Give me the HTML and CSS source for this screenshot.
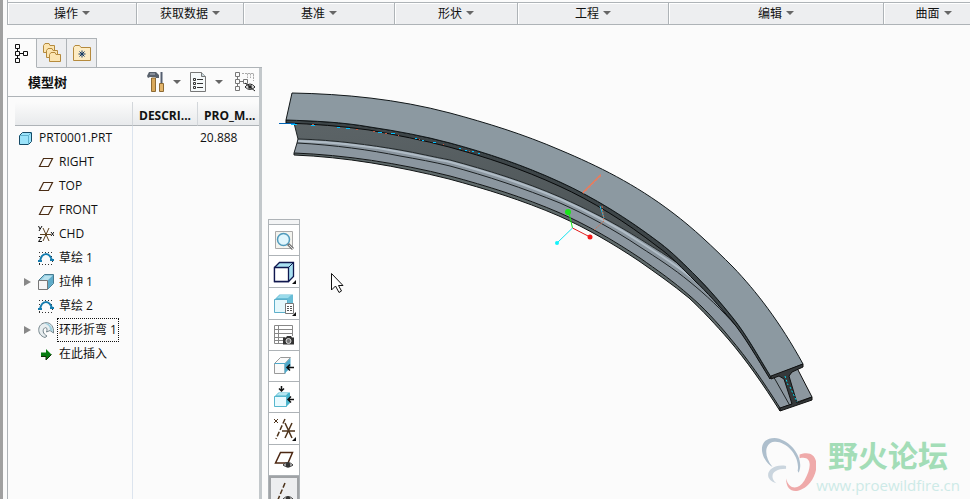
FILE: index.html
```
<!DOCTYPE html>
<html lang="zh-CN">
  <head>
    <meta charset="UTF-8">
    <title>PRT0001</title>
    <link rel="stylesheet" href="styles.css">
  </head>
  <body>
    <svg class="defs" width="0" height="0">
      <symbol id="plane" viewBox="0 0 16 16"><path d="M5.500 4.500H14.500L10.500 12.500H1.500Z" fill="none" stroke="#4a2c14" stroke-width="1.200"/></symbol>
      <symbol id="sketch" viewBox="0 0 16 16">
        <path d="M1 2.500H15M1 6.500H3M13 6.500H15M1 14.500H15M1.500 10V14M14.500 11V14" stroke="#333" stroke-dasharray="1 2" fill="none"/>
        <path d="M2 11C4 2 11 2 14 10" stroke="#157cae" stroke-width="2" fill="none"/>
        <path d="M0 10h4v2H0zM12 9h4v2h-4z" fill="#157cae"/>
      </symbol>
    </svg>
    <nav id="ribbon">
      <button class="group operate">操作<i></i></button>
      <button class="group data">获取数据<i></i></button>
      <button class="group datum">基准<i></i></button>
      <button class="group shape">形状<i></i></button>
      <button class="group engineering">工程<i></i></button>
      <button class="group edit">编辑<i></i></button>
      <button class="group surface">曲面<i></i></button>
    </nav>
    <div id="workspace">
      <div id="navigator">
        <div class="tabs">
          <button class="active" aria-label="模型树">
            <svg width="14" height="20" viewBox="0 0 14 20" fill="none" stroke="#111"><path d="M2.500 5V8M2.500 12V15M5 10.500H9"/><path d="M.5 1.500H4.500V5.500H.5ZM.5 8.500H4.500V12.500H.5ZM.5 15.500H4.500V19.500H.5ZM8.500 8.500H12.500V12.500H8.500Z"/></svg>
          </button>
          <button aria-label="文件夹浏览器">
            <svg width="20" height="20" viewBox="0 0 20 20" fill="#fce5b1" stroke="#b58a3d"><path d="M1.500 2.500L3 .5H7L8 2.500H12.500V9.500H1.500Z"/><path d="M4.500 7.500L6 5.500H10L11 7.500H15.500V14.500H4.500Z"/><path d="M7.500 11.500L9 9.500H13L14 11.500H18.500V18.500H7.500Z"/></svg>
          </button>
          <button aria-label="收藏夹">
            <svg width="18" height="16" viewBox="0 0 18 16"><path d="M.5 15.500V2.500L2 .5H6.500L8 2.500H17.500V15.500Z" fill="#fdecc4" stroke="#b58a3d"/><path d="M9 5.500V12.500M5.500 9H12.500M6.500 6.500L11.500 11.500M11.500 6.500L6.500 11.500" stroke="#143a66"/></svg>
          </button>
        </div>
        <div class="panel">
          <div class="titlebar">
            <h1>模型树</h1>
            <button class="tool" aria-label="设置">
              <svg width="18" height="20" viewBox="0 0 18 20"><path d="M4.500 6H8.500V19.500H4.500Z" fill="#d9a85a" stroke="#8d6a34"/><path d="M0 4L2 0H9L12 3V6H9L8 5H3L1 6Z" fill="#59616c"/><path d="M3 2H8" stroke="#b6bdc8"/><path d="M14.500 0V11" stroke="#555f70" stroke-width="2"/><path d="M12.500 11.500H16.500V19.500H12.500Z" fill="#e3b56b" stroke="#8d6a34"/></svg>
              <i></i>
            </button>
            <button class="tool" aria-label="显示">
              <svg width="17" height="20" viewBox="0 0 17 20"><path d="M.5 .5H11.500L15.500 4.500V19.500H.5Z" fill="#f5f9fa" stroke="#777"/><path d="M11.500 .5V4.500H15.500" fill="#c8d8dd" stroke="#777"/><path d="M7 7.500H13M7 11.500H13M7 15.500H13" stroke="#333"/><path d="M3.500 6.500h2v2h-2zM3.500 10.500h2v2h-2zM3.500 14.500h2v2h-2z" fill="none" stroke="#333"/></svg>
              <i></i>
            </button>
            <button class="tool" aria-label="隐藏">
              <svg width="21" height="20" viewBox="0 0 21 20" fill="none" stroke="#777"><path d="M.5 .5H4.500V4.500H.5ZM.5 7.500H4.500V11.500H.5ZM.5 14.500H4.500V18.500H.5ZM8.500 7.500H12.500V11.500H8.500ZM2.500 4.500V7.500M2.500 11.500V14.500M4.500 9.500H8.500"/><path d="M7 1.500H18.500V9M12.500 1.500V6M15.500 1.500V6M18.500 1.500V6" stroke="#aaa" stroke-dasharray="2 1"/><path d="M10 15Q15 9 20 15Q15 20 10 15Z" stroke="#222"/><circle cx="15" cy="15" r="2" fill="#222"/><path d="M10 11L20 19" stroke="#222"/></svg>
            </button>
          </div>
          <div class="tree">
            <table>
              <colgroup><col class="name"><col class="description"><col></colgroup>
              <thead>
                <tr><th></th><th>DESCRI...</th><th>PRO_M...</th></tr>
              </thead>
              <tbody>
                <tr>
                  <td class="root"><svg class="icon" viewBox="0 0 16 16"><path d="M1.500 5.500L4.500 2.500H13.500V11.500L10.500 14.500H1.500Z" fill="#9be3fa" stroke="#164a66"/><path d="M1.500 5.500H10.500V14.500M10.500 5.500L13.500 2.500" fill="none" stroke="#5fb0cc"/></svg><span>PRT0001.PRT</span></td><td></td><td>20.888</td>
                </tr>
                <tr><td><svg class="icon"><use href="#plane"/></svg><span>RIGHT</span></td><td></td><td></td></tr>
                <tr><td><svg class="icon"><use href="#plane"/></svg><span>TOP</span></td><td></td><td></td></tr>
                <tr><td><svg class="icon"><use href="#plane"/></svg><span>FRONT</span></td><td></td><td></td></tr>
                <tr>
                  <td><svg class="icon" viewBox="0 0 16 16" fill="none"><path d="M5 2L11 15M11 2L5 15M2 8.500H13" stroke="#5b3f1b"/><path d="M.5 0L2 3M4 0L1 5M0 11.500H3.500L.5 15.500H4M13 6L16 10M16 6L13 10" stroke="#111"/></svg><span>CHD</span></td><td></td><td></td>
                </tr>
                <tr><td><svg class="icon"><use href="#sketch"/></svg><span>草绘 1</span></td><td></td><td></td></tr>
                <tr class="closed">
                  <td><svg class="icon" viewBox="0 0 16 16"><path d="M.5 6.500L6.500 .5H15.500V9.500L9.500 15.500" fill="#91cbe0" stroke="#477b90"/><path d="M10 6L15 1V9L10 15Z" fill="#5eabc9"/><path d="M3 6.500L7 2H14L10 6Z" fill="#b9e2ee"/><path d="M.5 6.500H9.500V15.500H.5Z" fill="#f5f5f5" stroke="#777"/></svg><span>拉伸 1</span></td><td></td><td></td>
                </tr>
                <tr><td><svg class="icon"><use href="#sketch"/></svg><span>草绘 2</span></td><td></td><td></td></tr>
                <tr class="closed selected">
                  <td><svg class="icon" viewBox="0 0 16 16"><path d="M7 15.500C-2 13 -1 1 8 .7C13 .5 16 5 15.500 11L12 8.500L8.500 10C10 6 8 5 6.500 6C4 8 5 12 9 14Z" fill="#e8eef0" stroke="#75858c"/><path d="M6 1.500C11 0 14 4 15 10L12 8C12 4 9 2 6 1.500Z" fill="#9fcfdf"/></svg><span>环形折弯 1</span></td><td></td><td></td>
                </tr>
                <tr><td><svg class="icon" viewBox="0 0 16 16"><path d="M3 6.500H8V3L13.500 8.500L8 14V10.500H3Z" fill="#087c12"/><path d="M3 10.500H8V14L13.500 8.500" fill="none" stroke="#152e0b"/></svg><span>在此插入</span></td><td></td><td></td></tr>
              </tbody>
            </table>
          </div>
        </div>
      </div>
      <div id="graphics">
        <svg class="model" width="708" height="474" viewBox="262 25 708 474" fill="none" stroke-linejoin="round">
          <defs>
            <linearGradient id="web" x1="0" y1="0" x2="0.300" y2="1"><stop offset="0" stop-color="#5c6467"/><stop offset="1" stop-color="#474e50"/></linearGradient>
          </defs>
          <!-- lower flange -->
          <path d="M797 368L812 397L780 408L770 378Z" fill="#8c979f" stroke="#111"/>
          <path d="M298 139C336 140 370 145 400 150C417 153 434 157 450 160C487 170 523 181 560 197C587 209 613 222 640 239C659 251 678 262 697 277C712 291 722 303 733 318C746 334 758 356 771 377L792 403L780 408C763 381 747 358 730 338C717 322 703 307 690 296C673 281 657 270 640 258C613 240 587 225 560 213C523 197 487 186 450 176C398 163 345 155 294 153Z" fill="#8b969f"/>
          <path d="M294 153C345 155 398 163 450 176C487 186 523 197 560 213C587 225 613 240 640 258C657 270 673 281 690 296C703 307 717 322 730 338C747 358 763 381 780 408V411C763 384 746 360 729 340C716 325 702 310 689 298C672 284 656 273 639 261C612 243 586 228 559 216C522 200 486 189 449 179C397 166 345 157 294 155Z" fill="#606b6c" stroke="#101314"/>
          <!-- web -->
          <path d="M294 123L298 139C336 140 370 145 400 150C417 153 434 157 450 160C487 170 523 181 560 197C587 209 613 222 640 239C659 251 678 262 697 278L728 312L697 277L660 243L560 182L450 143L370 127Z" fill="url(#web)"/>
          <path d="M298 141C336 142 370 146 400 152C417 155 434 159 450 162C487 172 523 183 560 199C587 211 613 224 640 242C659 254 678 266 697 282C718 301 740 328 755 348" stroke="#b0bcc6" stroke-width="2"/>
          <path d="M298 139C336 140 370 145 400 150C417 153 434 157 450 160C487 170 523 181 560 197C587 209 613 222 640 239C659 251 678 262 697 278C709 289 720 301 728 312" stroke="#202628"/>
          <path d="M297 143C335 145 370 150 400 156C417 159 434 162 450 166C487 176 523 188 560 203C587 215 613 229 640 247C657 258 673 268 690 282C706 295 721 309 737 327C752 344 765 362 776 381L789 404" stroke="#1d2224"/>
          <path d="M294 123L298 139L297 143L294 153" stroke="#1d2224"/>
          <!-- upper flange -->
          <path d="M286 120C314 121 342 122 370 127C397 131 424 136 450 143C487 153 523 165 560 182C593 197 627 218 660 243C672 252 685 265 697 277C709 289 721 303 733 318C746 334 758 356 771 377L770 379C757 358 745 337 732 321C719 306 707 292 695 281C683 269 671 256 658 247C626 222 592 201 559 186C522 169 486 157 449 147C423 140 396 135 369 130C341 126 314 124 286 123Z" fill="#3d4548" stroke="#080a0b"/>
          <path d="M292 93C345 94 397 99 450 113C487 123 523 134 560 150C598 166 635 184 673 213C693 228 713 247 733 267C756 291 780 322 803 364L771 377C758 356 746 334 733 318C721 303 709 289 697 277C685 265 672 252 660 243C627 218 593 197 560 182C523 165 487 153 450 143C424 136 397 131 370 127C342 122 314 121 286 120Z" fill="#8c99a1" stroke="#111719"/>
          <!-- section at the free end -->
          <path d="M771 376L803 364V367L792 372L789 376L797 403L812 397V400L780 411V408L792 404L784 379L779 376L771 379Z" fill="#35393b" stroke="#111"/>
          <path d="M785 376L788 385M790 387L797 402" stroke="#00d5ea" stroke-dasharray="2 2"/>
          <!-- datum curve and sketched section -->
          <g shape-rendering="crispEdges">
            <path d="M279 123.500H295" stroke="#0063b5"/>
            <path d="M291 124.500H297M311 125.500H315M337 127.500H340M346 128.500H350M378 132.500H382M391 133.500H395M415 138.500H417M422 140.500H424M433 142.500H436M459 148.500H461M465 150.500H467M472 151.500H474M478 153.500H480" stroke="#00bfff"/>
            <path d="M312 124.500H314M356 129.500H358M373 131.500H375M385 133.500H387M398 135.500H399M419 139.500H420M443 144.500H444M469 151.500H470" stroke="#c0563e"/>
          </g>
          <path d="M583 193L601 175" stroke="#ec7b59" stroke-width="2"/>
          <path d="M584 193L602 175" stroke="#68a6d0" stroke-dasharray="1 1"/>
          <path d="M600 206L604 218" stroke="#20b8df"/>
          <path d="M602 206L604 221L594 230" stroke="#ce7252" stroke-dasharray="2 1"/>
          <!-- orientation triad -->
          <path d="M572.500 228L569 213" stroke="#18e818"/><circle cx="568" cy="212" r="3" fill="#1be51b"/>
          <path d="M572.500 228L590 237" stroke="#e31a1a"/><circle cx="590" cy="237" r="2.500" fill="#f51c1c"/>
          <path d="M572.500 228L557 243" stroke="#13e3f0"/><circle cx="557" cy="243" r="2" fill="#13f2fa"/>
          <path d="M331.500 273.500V290L335.500 286L339 292.500L341.500 291L338.500 285.500H343Z" fill="#fff" stroke="#111"/>
        </svg>
        <div class="viewbar">
          <div class="grip"></div>
          <button aria-label="重新调整">
            <svg viewBox="0 0 22 22"><path d="M2.500 2.500H19.500V19.500H2.500Z" fill="#f4f4ef" stroke="#aaa"/><circle cx="10.500" cy="10.500" r="6" fill="#e0f6fd" stroke="#4f9abc" stroke-width="1.500"/><path d="M15 15L20 20" stroke="#777" stroke-width="3"/><path d="M16 16L20 20" stroke="#ddd"/></svg>
          </button>
          <button class="more" aria-label="显示样式">
            <svg viewBox="0 0 22 22"><path d="M1.500 6.500L6.500 1.500H20.500V15.500L15.500 20.500H1.500Z" fill="#a9e1f2" stroke="#10184f" stroke-width="1.300"/><path d="M1.500 6.500H15.500V20.500H1.500Z" fill="#fff" stroke="#10184f" stroke-width="1.300"/><path d="M15.500 6.500L20.500 1.500" stroke="#10184f"/></svg>
          </button>
          <button class="more" aria-label="已命名视图">
            <svg viewBox="0 0 22 22"><path d="M1.500 6.500L6.500 1.500H20V10L13 19.500H1.500Z" fill="#69bdd6"/><path d="M1.500 6.500H14.500V19.500H1.500Z" fill="#e5f8fc" stroke="#5eafca"/><path d="M4 5L7 2H18L15 5Z" fill="#9bdbeb"/><path d="M12.500 10.500H20.500V20.500H12.500Z" fill="#fff" stroke="#777"/><path d="M14 13.500H19M14 15.500H19M14 17.500H19" stroke="#555" stroke-dasharray="2 1"/></svg>
          </button>
          <button aria-label="视图管理器">
            <svg viewBox="0 0 22 22"><path d="M1.500 1.500H19.500V12M1.500 1.500V19.500H11M1.500 5.500H19M1.500 9.500H19M1.500 13.500H12M1.500 16.500H11M5.500 1.500V19.500" fill="none" stroke="#888"/><path d="M10 13.500H13L14 12H18L19 13.500H21V20.500H10Z" fill="#333"/><circle cx="15.500" cy="17" r="2.500" fill="#777" stroke="#ddd"/></svg>
          </button>
          <button aria-label="剖面">
            <svg viewBox="0 0 22 22"><path d="M1.500 8.500L7.500 2.500H17.500L12 8.500V18.500H1.500Z" fill="#fafafa" stroke="#999"/><path d="M12 8.500L17.500 3V13L12 18Z" fill="#4ea8c9"/><path d="M1.500 8.500H12V18.500" fill="none" stroke="#4ea8c9"/><path d="M14 12.500H21M17 9.500L14 12.500L17 15.500" fill="none" stroke="#111" stroke-width="1.500"/></svg>
          </button>
          <button aria-label="激活剖面">
            <svg viewBox="0 0 22 22"><path d="M1.500 10.500L5.500 6.500H17V17L13.500 20.500H1.500Z" fill="#48b5cd"/><path d="M3 9.500L6 7H15L13 9.500Z" fill="#b5e6f0"/><path d="M1.500 10.500H13.500V20.500H1.500Z" fill="#e8faff" stroke="#56b7ce"/><path d="M8.500 0V5M6 2.500L8.500 5L11 2.500M15 13.500H21M18 10.500L15 13.500L18 16.500" fill="none" stroke="#111" stroke-width="1.500"/></svg>
          </button>
          <button class="more" aria-label="基准显示">
            <svg viewBox="0 0 22 22" fill="none" stroke="#4d331b"><path d="M1 1L5 5M5 1L1 5"/><path d="M12 1L3 21" stroke-width="1.500" stroke-dasharray="5 2"/><path d="M12 5L19 20M19 5L12 20M9 13H22" stroke-width="1.500"/></svg>
          </button>
          <button aria-label="平面显示">
            <svg viewBox="0 0 22 22"><path d="M7.500 3.500H19.500L15 14H2.500Z" fill="none" stroke="#4d2813" stroke-width="1.500"/><path d="M10 16Q15 11 20 16Q15 20 10 16Z" fill="#eee" stroke="#333"/><circle cx="15" cy="16" r="2.500" fill="#333"/></svg>
          </button>
          <button class="pressed" aria-label="轴显示">
            <svg viewBox="0 0 22 22"><path d="M12 2L4 21" stroke="#4d331b" stroke-width="1.500" stroke-dasharray="5 2"/><path d="M10 18Q15 13 20 18Q15 22 10 18Z" fill="#eee" stroke="#333"/><circle cx="15" cy="18" r="2.500" fill="#333"/></svg>
          </button>
        </div>
        <div class="watermark">
          <svg width="56" height="58" viewBox="0 0 58 58" fill-rule="evenodd">
            <path d="M40 37C47 22 31 2 15 1C-3 1 -1 22 13 31C4 21 4 6 15 5C27 4 42 20 39 35Z" fill="#aebfcd"/>
            <path d="M41 18C62 11 62 35 52 47C42 59 27 60 27 43C30 55 40 55 46 45C54 31 54 19 41 22Z" fill="#efaaaa"/>
            <path d="M27 30C9 27 1 43 17 48C9 41 13 33 27 33Z" fill="#cad5de"/>
          </svg>
          <div><strong>野火论坛</strong><span>www.proewildfire.cn</span></div>
        </div>
      </div>
    </div>
  </body>
</html>
```
FILE: styles.css
```
*
{
  box-sizing: border-box;
}
body
{
  display: flex;
  flex-direction: column;
  height: 100vh;
  margin: 0;
  padding-left: 4px;
  overflow: hidden;
  border-left: 3px solid #A0A0A0;
  background: #FBFBFB;
  color: #111;
  font-family: "Open Sans", "Noto Sans CJK SC", sans-serif;
  font-size: 12px;
}
button
{
  margin: 0;
  padding: 0;
  border: 0;
  background: none;
  color: inherit;
  font: inherit;
}
svg
{
  display: block;
  flex: none;
}
.defs
{
  position: absolute;
}

/* ribbon */
#ribbon
{
  display: flex;
  flex: none;
  height: 25px;
  padding-top: 2px;
  overflow: hidden;
  border-left: 1px solid #AEB3B7;
}
.group
{
  display: flex;
  flex: none;
  align-items: center;
  justify-content: center;
  gap: 4px;
  padding-bottom: 2px;
  border: solid #AEB3B7;
  border-width: 1px 1px 1px 0;
  background: #EDEEF0;
  box-shadow: inset 1px 1px #FFF;
}
.operate { width: 129px; }
.data { width: 107px; }
.datum { width: 151px; }
.shape { width: 123px; }
.engineering { width: 151px; }
.edit { width: 215px; }
.surface { flex: 1 0 100px; }
.group i,
.tool i
{
  border: 4px solid transparent;
  border-top-color: #666;
  border-bottom: 0;
}

#workspace
{
  display: flex;
  flex: 1;
  min-height: 0;
}

/* navigator */
#navigator
{
  display: flex;
  flex: none;
  flex-direction: column;
  width: 255px;
  padding-top: 13px;
}
.tabs
{
  display: flex;
  flex: none;
  height: 30px;
  border-left: 1px solid #AEB3B7;
  box-shadow: inset 0 -1px #AEB3B7;
}
.tabs button
{
  display: flex;
  align-items: center;
  justify-content: center;
  width: 30px;
  border: solid #AEB3B7;
  border-width: 1px 1px 1px 0;
  background: #EDEEF0;
}
.tabs .active
{
  width: 29px;
  border-bottom-color: #FBFBFB;
  background: #FBFBFB;
}
.panel
{
  display: flex;
  flex: 1;
  flex-direction: column;
  min-height: 0;
  border-left: 1px solid #AEB3B7;
  border-right: 3px solid #C3C8CB;
}
.titlebar
{
  display: flex;
  flex: none;
  align-items: center;
  height: 29px;
  padding: 0 3px 0 20px;
  border-bottom: 1px solid #AEB3B7;
}
.titlebar h1
{
  flex: 1;
  margin: 0;
  padding-bottom: 2px;
  font-size: 13px;
}
.tool
{
  display: flex;
  align-items: center;
  gap: 8px;
  margin-left: 9px;
}
.tool:last-child
{
  margin-left: 12px;
}
.tree
{
  flex: 1;
  padding: 5px 0 0 7px;
  background: linear-gradient(#DCE4EE, #DCE4EE) 124px 5px / 1px 100% no-repeat;
}
table
{
  width: 100%;
  table-layout: fixed;
  border-collapse: separate;
  border-spacing: 0;
}
.name
{
  width: 118px;
}
.description
{
  width: 65px;
}
th
{
  height: 24px;
  padding: 4px 0 0 6px;
  border-right: 1px solid #D3D7DB;
  border-bottom: 1px solid #AEB3B7;
  background: linear-gradient(#FBFBFB, #E8EAEC);
  line-height: 18px;
  text-align: left;
  white-space: nowrap;
}
th:last-child
{
  border-right: 0;
}
td
{
  height: 24px;
  padding: 0 2px 2px;
  white-space: nowrap;
}
td:first-child
{
  display: flex;
  align-items: center;
  gap: 3px;
  padding: 0 0 0 23px;
}
td.root
{
  padding-left: 3px;
}
td span
{
  padding: 1px 1px 3px;
  border: 1px dotted transparent;
}
.selected td span
{
  border-color: #111;
}
.icon
{
  width: 16px;
  height: 16px;
}
.closed td:first-child
{
  padding-left: 9px;
}
.closed td:first-child::before
{
  margin-right: 4px;
  border: 4px solid transparent;
  border-right: 0;
  border-left: 7px solid #888;
  content: "";
}

/* graphics window */
#graphics
{
  position: relative;
  flex: 1;
  min-width: 0;
  overflow: hidden;
}
.viewbar
{
  position: absolute;
  top: 194px;
  left: 6px;
  width: 32px;
  border: 1px solid #AEB3B7;
  background: #FFF;
}
.grip
{
  height: 5px;
  border-bottom: 1px solid #AEB3B7;
  background: #F3F4F5;
}
.viewbar button
{
  display: flex;
  position: relative;
  align-items: center;
  justify-content: center;
  width: 100%;
  height: 31px;
  border-bottom: 1px solid #AEB3B7;
}
.viewbar button svg
{
  width: 22px;
  height: 22px;
}
.viewbar .more
{
  height: 32px;
}
.more::after
{
  position: absolute;
  right: 3px;
  bottom: 3px;
  border: 2px solid #111;
  border-top-color: transparent;
  border-left-color: transparent;
  content: "";
}
.viewbar .pressed
{
  border: 2px solid #A0A3A6;
  background: #EDEEF0;
}
.watermark
{
  display: flex;
  position: absolute;
  right: 10px;
  bottom: 5px;
  align-items: center;
}
.watermark div
{
  display: flex;
  flex-direction: column;
  align-items: flex-end;
}
.watermark strong
{
  padding-right: 12px;
  color: #A3DDB7;
  font-size: 30px;
  line-height: 40px;
}
.watermark span
{
  color: #CDEAE7;
  font-size: 15px;
  line-height: 18px;
}
```
